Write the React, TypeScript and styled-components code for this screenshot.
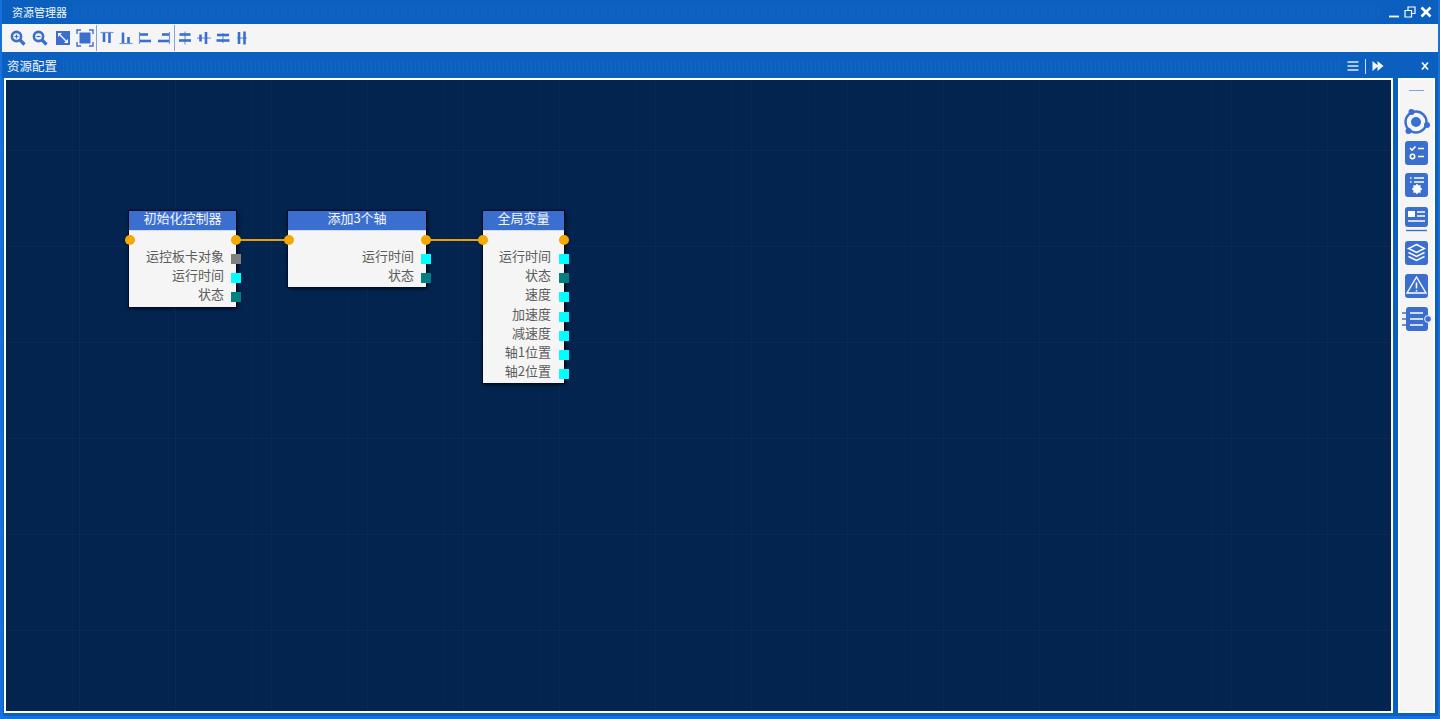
import React from 'react';
import styled, { createGlobalStyle } from 'styled-components';

const BLUE = '#3b6fcf';

const GlobalStyle = createGlobalStyle`
	html, body {
		margin: 0;
		padding: 0;
		overflow: hidden;
	}
	body {
		font-family: "Noto Sans CJK SC", "Liberation Sans", sans-serif;
	}
`;

const Frame = styled.div`
	box-sizing: border-box;
	width: 1440px;
	height: 719px;
	display: flex;
	flex-direction: column;
	background: #0a5fbf;
	border-left: 2px solid #1670de;
	border-right: 2px solid #1670de;
	border-bottom: 3px solid #1670de;
`;

const TitleBar = styled.div`
	height: 24px;
	display: flex;
	align-items: center;
	padding: 0 6px 0 10px;
	gap: 7px;
	flex: none;
`;

const TitleText = styled.span`
	font-size: 11px;
	line-height: 24px;
	color: #f2f6fc;
	white-space: nowrap;
`;

const Grip = styled.div`
	flex: 1;
	height: 14px;
	background: repeating-linear-gradient(
		90deg,
		rgba(255, 255, 255, 0.04) 0 1px,
		transparent 1px 3px,
		rgba(255, 255, 255, 0.025) 3px 5px,
		transparent 5px 8px
	);
`;

const WindowButtons = styled.div`
	display: flex;
	align-items: center;
	gap: 4px;
	color: #fff;
`;

const Toolbar = styled.div`
	height: 28px;
	flex: none;
	display: flex;
	align-items: center;
	background: #f5f5f5;
	padding-left: 5px;
`;

const ToolButton = styled.div<{ $w: number }>`
	width: ${(p) => p.$w}px;
	height: 20px;
	display: flex;
	align-items: center;
	justify-content: center;
	color: ${BLUE};
`;

const ToolSeparator = styled.div`
	width: 1px;
	height: 26px;
	background: #7ea3e0;
`;

const PanelHeader = styled.div`
	height: 26px;
	flex: none;
	display: flex;
	align-items: center;
	padding: 2px 8px 0 5px;
	gap: 6px;
	box-sizing: border-box;
`;

const PanelTitle = styled.span`
	font-size: 12.5px;
	line-height: 24px;
	color: #f2f6fc;
	white-space: nowrap;
`;

const HeaderDivider = styled.div`
	width: 1px;
	height: 15px;
	background: #cfe0f7;
`;

const PanelBody = styled.div`
	flex: 1;
	min-height: 0;
	display: flex;
	gap: 5px;
	padding: 0 3px 3px 1px;
	border-left: 1px solid #1670de;
`;

const Canvas = styled.div`
	flex: 1;
	position: relative;
	overflow: hidden;
	border: 2px solid #fff;
	background-color: #02244f;
	background-image:
		linear-gradient(rgba(255, 255, 255, 0.018) 1px, transparent 1px),
		linear-gradient(90deg, rgba(255, 255, 255, 0.018) 1px, transparent 1px),
		linear-gradient(rgba(255, 255, 255, 0.008) 1px, transparent 1px),
		linear-gradient(90deg, rgba(255, 255, 255, 0.008) 1px, transparent 1px);
	background-size:
		96px 96px,
		96px 96px,
		19.2px 19.2px,
		19.2px 19.2px;
	background-position: 73px 70px;
`;

const Wires = styled.svg`
	position: absolute;
	left: 0;
	top: 0;
	width: 100%;
	height: 100%;
`;

const Node = styled.div<{ $x: number; $w: number }>`
	position: absolute;
	left: ${(p) => p.$x}px;
	top: 131px;
	width: ${(p) => p.$w}px;
	background: #f5f5f5;
	box-shadow: 0 0 0 1px #000c20, 1px 1px 4px #000;
`;

const NodeHeader = styled.div`
	height: 19px;
	background: ${BLUE};
	border-bottom: 1px solid #cfdcf3;
	color: #f4f7fc;
	font-size: 13px;
	line-height: 14px;
	text-align: center;
	white-space: nowrap;
`;

const ExecRow = styled.div`
	height: 18px;
	position: relative;
`;

const ExecPort = styled.span<{ $side: 'left' | 'right'; $offset: number }>`
	position: absolute;
	top: 4px;
	${(p) => p.$side}: ${(p) => p.$offset}px;
	width: 10px;
	height: 10px;
	border-radius: 50%;
	background: #f6a800;
`;

const Row = styled.div<{ $pad: number }>`
	height: 19.2px;
	position: relative;
	padding-right: ${(p) => p.$pad}px;
	text-align: right;
	color: #5c5c5c;
	font-size: 13px;
	line-height: 14px;
	white-space: nowrap;
`;

const DataPort = styled.span<{ $color: string }>`
	position: absolute;
	right: -5px;
	top: 5px;
	width: 10px;
	height: 10px;
	background: ${(p) => p.$color};
`;

const SideBar = styled.div`
	width: 37px;
	flex: none;
	box-sizing: border-box;
	background: #f5f5f5;
	border: 2px solid #fff;
	display: flex;
	flex-direction: column;
	align-items: center;
	padding-top: 10px;
`;

const SideDash = styled.div`
	width: 15px;
	height: 1px;
	background: #7ea3e0;
	margin-bottom: 17px;
`;

const SideIcon = styled.div<{ $gap: number }>`
	width: 33px;
	height: 26px;
	margin-bottom: ${(p) => p.$gap}px;
	display: flex;
	justify-content: center;
`;

const CYAN = '#00ffff';
const TEAL = '#008080';
const GRAY = '#808080';

const NODES = [
	{
		x: 123,
		w: 107,
		pad: 12,
		left: -4.5,
		right: -5,
		title: '初始化控制器',
		ports: [
			['运控板卡对象', GRAY],
			['运行时间', CYAN],
			['状态', TEAL],
		],
	},
	{
		x: 282,
		w: 138,
		pad: 12,
		left: -4.5,
		right: -5,
		title: '添加3个轴',
		ports: [
			['运行时间', CYAN],
			['状态', TEAL],
		],
	},
	{
		x: 477,
		w: 81,
		pad: 13,
		left: -5,
		right: -4.5,
		title: '全局变量',
		ports: [
			['运行时间', CYAN],
			['状态', TEAL],
			['速度', CYAN],
			['加速度', CYAN],
			['减速度', CYAN],
			['轴1位置', CYAN],
			['轴2位置', CYAN],
		],
	},
];

const ZOOM_ICONS: React.ReactNode[] = [
	<>
		<circle cx="6.5" cy="6.5" r="4.6" fill="none" stroke="currentColor" strokeWidth="2.6" />
		<path d="M10 10l4.5 4.5" stroke="currentColor" strokeWidth="3.2" />
		<path d="M4.5 6.5h4M6.5 4.5v4" stroke="currentColor" strokeWidth="1.2" />
	</>,
	<>
		<circle cx="6.5" cy="6.5" r="4.6" fill="none" stroke="currentColor" strokeWidth="2.6" />
		<path d="M10 10l4.5 4.5" stroke="currentColor" strokeWidth="3.2" />
		<path d="M4.5 6.5h4" stroke="currentColor" strokeWidth="1.2" />
	</>,
	<>
		<rect x="1" y="1" width="14" height="14" fill="currentColor" />
		<path d="M5 5l6 6" stroke="#fff" strokeWidth="1.2" />
		<path d="M3 7V3h4zM13 9v4H9z" fill="#fff" />
	</>,
];

// each align icon: [thin guide line, first block, second block]
const ALIGN_ICONS: string[][] = [
	['M1.5 2.5h13', 'M5 3v9', 'M10.5 3v10'],
	['M1.5 13.5h13', 'M5 13V2.5', 'M10.5 13V7'],
	['M2.5 2v12', 'M3 4.5h8', 'M3 11h11'],
	['M13.5 2v12', 'M13 4.5H6', 'M13 11H2'],
	['M8 1.5v13', 'M2.5 4.5h11', 'M2 10.5h12'],
	['M1 8h14', 'M4.5 4.5v7', 'M10 2v12'],
	['M8 3v10', 'M2 5h12', 'M1.5 10.5h13'],
	['M3 8h10', 'M5 2v12', 'M10.5 1.5v13'],
];

function ToolIcon({ children }: { children: React.ReactNode }) {
	return (
		<svg width="16" height="16" viewBox="0 0 16 16">
			{children}
		</svg>
	);
}

function AlignIcon({ parts }: { parts: string[] }) {
	return (
		<ToolIcon>
			<path d={parts[0]} stroke="#6f97de" strokeWidth="1.2" fill="none" />
			<path d={parts[1]} stroke="currentColor" strokeWidth="2.6" fill="none" />
			<path d={parts[2]} stroke="currentColor" strokeWidth="2.6" fill="none" />
		</ToolIcon>
	);
}

function SquareIcon({ children }: { children: React.ReactNode }) {
	return (
		<svg width="33" height="26" viewBox="0 0 33 26">
			<rect x="5" y="1" width="23" height="24" rx="3" fill={BLUE} />
			<g stroke="#fff" fill="none" strokeWidth="1.6">
				{children}
			</g>
		</svg>
	);
}

function App() {
	return (
		<Frame>
			<GlobalStyle />
			<TitleBar>
				<TitleText>资源管理器</TitleText>
				<Grip />
				<WindowButtons>
					<svg width="12" height="12" viewBox="0 0 12 12">
						<path d="M1 10.5h10" stroke="currentColor" strokeWidth="1.8" />
					</svg>
					<svg width="12" height="12" viewBox="0 0 12 12">
						<path
							d="M1 4.5h6.5v6.5H1zM4 4.5V1h7v6.5H7.5"
							fill="none"
							stroke="currentColor"
							strokeWidth="1.2"
						/>
					</svg>
					<svg width="12" height="12" viewBox="0 0 12 12">
						<path d="M1.5 1.5l9 9M10.5 1.5l-9 9" stroke="currentColor" strokeWidth="2.6" />
					</svg>
				</WindowButtons>
			</TitleBar>
			<Toolbar>
				{ZOOM_ICONS.map((icon, i) => (
					<ToolButton $w={22.25} key={i}>
						<ToolIcon>{icon}</ToolIcon>
					</ToolButton>
				))}
				<ToolButton $w={22.25}>
					<svg width="18" height="18" viewBox="0 0 18 18">
						<rect x="3.5" y="3.5" width="11" height="11" fill="currentColor" />
						<path
							d="M1 5V1h4M13 1h4v4M17 13v4h-4M5 17H1v-4"
							fill="none"
							stroke="currentColor"
							strokeWidth="1.4"
						/>
					</svg>
				</ToolButton>
				<ToolSeparator />
				{ALIGN_ICONS.slice(0, 4).map((parts) => (
					<ToolButton $w={19.25} key={parts[0]}>
						<AlignIcon parts={parts} />
					</ToolButton>
				))}
				<ToolSeparator />
				{ALIGN_ICONS.slice(4).map((parts) => (
					<ToolButton $w={19} key={parts[0]}>
						<AlignIcon parts={parts} />
					</ToolButton>
				))}
			</Toolbar>
			<PanelHeader>
				<PanelTitle>资源配置</PanelTitle>
				<Grip />
				<svg width="12" height="12" viewBox="0 0 12 12">
					<path d="M0.5 2h11M0.5 6h11M0.5 10h11" stroke="#a9c6ee" strokeWidth="1.8" />
				</svg>
				<HeaderDivider />
				<svg width="12" height="12" viewBox="0 0 12 12">
					<path d="M0.5 1l6 5-6 5zM5.5 1l6 5-6 5z" fill="#f2f6fc" />
				</svg>
				<svg width="40" height="12" viewBox="0 0 40 12">
					<path d="M32 2.5l6 7M38 2.5l-6 7" stroke="#fff" strokeWidth="1.7" />
				</svg>
			</PanelHeader>
			<PanelBody>
				<Canvas>
					<Wires>
						<path d="M230 160H283M420 160H477" stroke="#e8a010" strokeWidth="2" fill="none" />
					</Wires>
					{NODES.map((node) => (
						<Node $x={node.x} $w={node.w} key={node.title}>
							<NodeHeader>{node.title}</NodeHeader>
							<ExecRow>
								<ExecPort $side="left" $offset={node.left} />
								<ExecPort $side="right" $offset={node.right} />
							</ExecRow>
							{node.ports.map(([label, color]) => (
								<Row $pad={node.pad} key={label}>
									{label}
									<DataPort $color={color} />
								</Row>
							))}
						</Node>
					))}
				</Canvas>
				<SideBar>
					<SideDash />
					<SideIcon $gap={6}>
						<svg width="33" height="30" viewBox="0 0 33 30">
							<circle cx="16" cy="14" r="10.5" fill="none" stroke={BLUE} strokeWidth="2.4" />
							<circle cx="16" cy="14" r="5" fill={BLUE} />
							<circle cx="11.5" cy="4" r="3" fill={BLUE} />
							<circle cx="27" cy="17" r="3" fill={BLUE} />
							<circle cx="8.5" cy="23" r="3" fill={BLUE} />
						</svg>
					</SideIcon>
					<SideIcon $gap={6}>
						<SquareIcon>
							<path d="M10 8l2 2 3.5-3.5M18 8.5h6M18 16.5h6" />
							<circle cx="12.5" cy="16.5" r="2.2" />
						</SquareIcon>
					</SideIcon>
					<SideIcon $gap={8}>
						<SquareIcon>
							<path d="M10 6h1.5M14 6h10M10 10h1.5M14 10h10" />
							<circle cx="17" cy="17" r="2.8" strokeWidth="2.2" />
							<path d="M17 12v10M12 17h10M13.5 13.5l7 7M20.5 13.5l-7 7" strokeWidth="1.5" />
						</SquareIcon>
					</SideIcon>
					<SideIcon $gap={8}>
						<svg width="33" height="26" viewBox="0 0 33 26">
							<rect x="5" y="1" width="23" height="20" rx="3" fill={BLUE} />
							<path d="M8 5h7v6H8z" fill="#fff" />
							<path d="M17 6h8M17 10h8M8 15h17" stroke="#fff" strokeWidth="1.6" />
							<path d="M6 24.5h21" stroke={BLUE} strokeWidth="1.4" />
						</svg>
					</SideIcon>
					<SideIcon $gap={7}>
						<SquareIcon>
							<path d="M16.5 4.5l8 4-8 4-8-4zM8.5 12.5l8 4 8-4M8.5 16.5l8 4 8-4" strokeWidth="1.4" />
						</SquareIcon>
					</SideIcon>
					<SideIcon $gap={7}>
						<SquareIcon>
							<path d="M16.5 4l9.5 16h-19z" strokeWidth="1.4" />
							<path d="M16.5 9.5v6M16.5 17v1.5" />
						</SquareIcon>
					</SideIcon>
					<SideIcon $gap={0}>
						<svg width="33" height="26" viewBox="0 0 33 26">
							<rect x="6" y="1" width="22" height="24" rx="3" fill={BLUE} />
							<path d="M10 7h13M10 13h13M10 19h13" stroke="#fff" strokeWidth="1.6" />
							<path d="M2 7h4M2 13h4M2 19h4" stroke={BLUE} strokeWidth="1.6" />
							<circle cx="28" cy="13" r="3.4" fill={BLUE} stroke="#f5f5f5" strokeWidth="1" />
						</svg>
					</SideIcon>
				</SideBar>
			</PanelBody>
		</Frame>
	);
}

export default App;
